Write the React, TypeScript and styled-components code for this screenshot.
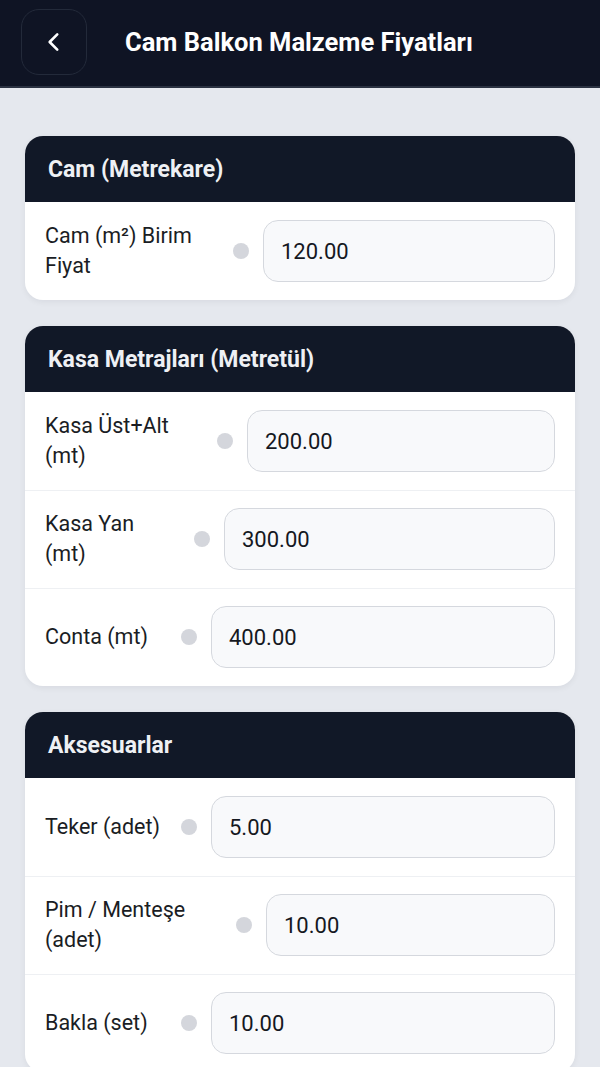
import styled, { createGlobalStyle } from 'styled-components';

type Field = { label: string; value: string; labelWidth: number };
type Section = { title: string; fields: Field[] };

const sections: Section[] = [
  {
    title: 'Cam (Metrekare)',
    fields: [{ label: 'Cam (m²) Birim\nFiyat', value: '120.00', labelWidth: 176 }],
  },
  {
    title: 'Kasa Metrajları (Metretül)',
    fields: [
      { label: 'Kasa Üst+Alt\n(mt)', value: '200.00', labelWidth: 160 },
      { label: 'Kasa Yan\n(mt)', value: '300.00', labelWidth: 137 },
      { label: 'Conta (mt)', value: '400.00', labelWidth: 124 },
    ],
  },
  {
    title: 'Aksesuarlar',
    fields: [
      { label: 'Teker (adet)', value: '5.00', labelWidth: 124 },
      { label: 'Pim / Menteşe\n(adet)', value: '10.00', labelWidth: 179 },
      { label: 'Bakla (set)', value: '10.00', labelWidth: 124 },
    ],
  },
];

function App() {
  return (
    <>
      <GlobalStyle />
      <Page>
        <Header>
          <BackButton aria-label="Geri">
            <svg width="26" height="26" viewBox="0 0 24 24" fill="none">
              <path
                d="M15 5 L8 12 L15 19"
                stroke="#ffffff"
                strokeWidth="2.4"
                strokeLinecap="round"
                strokeLinejoin="round"
              />
            </svg>
          </BackButton>
          <HeaderTitle>Cam Balkon Malzeme Fiyatları</HeaderTitle>
        </Header>
        <Content>
          {sections.map((section) => (
            <Card key={section.title}>
              <CardHeader>{section.title}</CardHeader>
              {section.fields.map((field) => (
                <Row key={field.label}>
                  <Label $width={field.labelWidth}>{field.label}</Label>
                  <Dot />
                  <ValueInput defaultValue={field.value} inputMode="decimal" />
                </Row>
              ))}
            </Card>
          ))}
        </Content>
      </Page>
    </>
  );
}

export default App;

const GlobalStyle = createGlobalStyle`
  * {
    box-sizing: border-box;
  }
  body {
    margin: 0;
    background: #e5e8ee;
    font-family: Roboto, "Noto Sans", "Liberation Sans", sans-serif;
  }
`;

const Page = styled.div`
  min-height: 100vh;
  background: #e5e8ee;
`;

const Header = styled.header`
  height: 88px;
  display: flex;
  align-items: center;
  padding: 0 21px;
  background: #0f1424;
  border-bottom: 2px solid #2b3242;
`;

const BackButton = styled.button`
  width: 66px;
  height: 66px;
  margin-top: -2px;
  display: flex;
  align-items: center;
  justify-content: center;
  background: transparent;
  border: 1.5px solid #232a3a;
  border-radius: 18px;
  padding: 0;
  cursor: pointer;
`;

const HeaderTitle = styled.h1`
  margin: -2px 0 0 38px;
  color: #ffffff;
  font-size: 25.5px;
  font-weight: 700;
`;

const Content = styled.main`
  display: flex;
  flex-direction: column;
  gap: 26px;
  padding: 48px 25px 0;
`;

const Card = styled.section`
  background: #ffffff;
  border-radius: 18px;
  overflow: hidden;
  box-shadow: 0 2px 6px rgba(15, 23, 42, 0.06);
`;

const CardHeader = styled.h2`
  margin: 0;
  height: 66px;
  display: flex;
  align-items: center;
  padding: 0 23px;
  background: #111827;
  color: #eef0f4;
  font-size: 23px;
  font-weight: 700;
`;

const Row = styled.div`
  display: flex;
  align-items: center;
  padding: 18px 20px;

  & + & {
    box-shadow: inset 0 1px 0 #eef0f3;
  }
`;

const Label = styled.span<{ $width: number }>`
  flex: 0 0 ${(props) => props.$width}px;
  white-space: pre-line;
  color: #1a1d24;
  font-size: 21.5px;
  line-height: 30px;
`;

const Dot = styled.span`
  flex: 0 0 16px;
  height: 16px;
  margin: 0 14px 0 12px;
  border-radius: 50%;
  background: #d4d6dc;
`;

const ValueInput = styled.input`
  flex: 1;
  min-width: 0;
  height: 62px;
  padding: 0 17px;
  background: #f8f9fb;
  border: 1.5px solid #d5d8de;
  border-radius: 15px;
  color: #15181f;
  font-family: inherit;
  font-size: 22px;
  outline: none;
`;
